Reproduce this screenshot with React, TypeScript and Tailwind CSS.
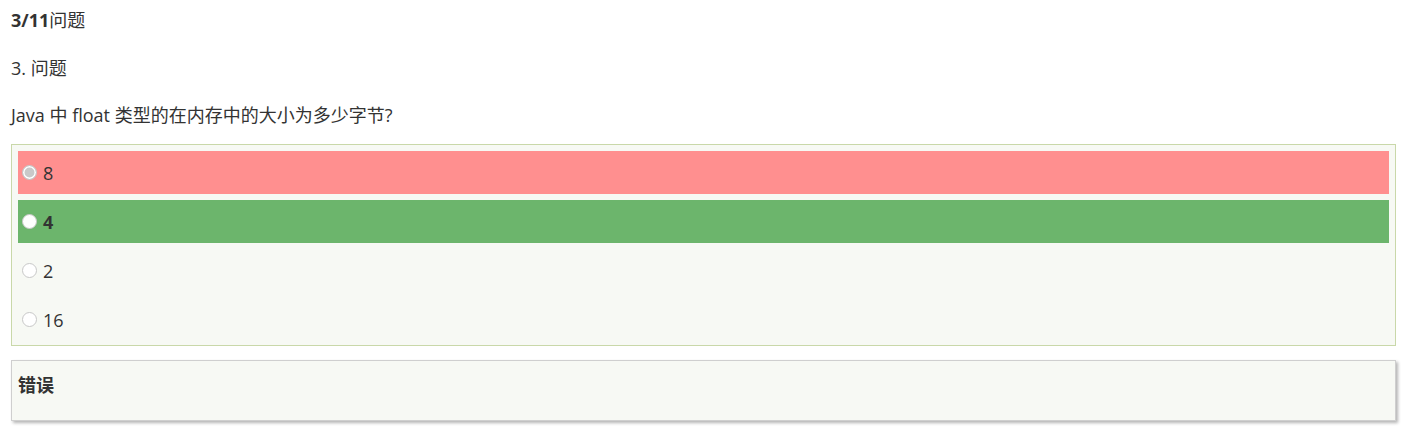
import React from "react";

function Radio({ fill }: { fill: string }) {
  return (
    <span
      className={`inline-block w-[15px] h-[15px] rounded-full border border-[#c8c8c8] ${fill} shadow-[inset_0_0_0_1.5px_#fff]`}
    />
  );
}

export default function App() {
  const rows = [
    { label: "8", bg: "bg-[#ff8f8f]", bold: false, fill: "bg-[#c9c9c9]" },
    { label: "4", bg: "bg-[#6cb56c]", bold: true, fill: "bg-white" },
    { label: "2", bg: "", bold: false, fill: "bg-white" },
    { label: "16", bg: "", bold: false, fill: "bg-white" },
  ];
  return (
    <div
      className="w-[1406px] h-[433px] bg-white text-[#333] px-[11px] pt-[8px] text-[18px]"
      style={{ fontFamily: '"Open Sans", "Noto Sans CJK SC", sans-serif' }}
    >
      <div className="h-[24px] leading-[24px]">
        <b>3/11</b>问题
      </div>
      <div className="h-[24px] leading-[24px] mt-[24px]">3. 问题</div>
      <div className="h-[24px] leading-[24px] mt-[23px]">Java 中 float 类型的在内存中的大小为多少字节?</div>
      <div className="mt-[17px] w-[1385px] border border-[#c9d8a9] bg-[#f7f9f4] px-[6px] pt-[6px] pb-[4px] flex flex-col gap-[6px]">
        {rows.map((r) => (
          <div key={r.label} className={`h-[43px] ${r.bg} flex items-center pl-[4px] gap-[6px]`}>
            <Radio fill={r.fill} />
            <span className={`text-[18px] leading-[24px] ${r.bold ? "font-bold" : ""}`}>{r.label}</span>
          </div>
        ))}
      </div>
      <div className="mt-[14px] w-[1385px] h-[61px] border border-[#cfcfcf] bg-[#f7f9f4] shadow-[2px_2px_3px_#b5b5b5] pl-[6px] pt-[12px]">
        <div className="text-[18px] leading-[24px] font-bold">错误</div>
      </div>
    </div>
  );
}
